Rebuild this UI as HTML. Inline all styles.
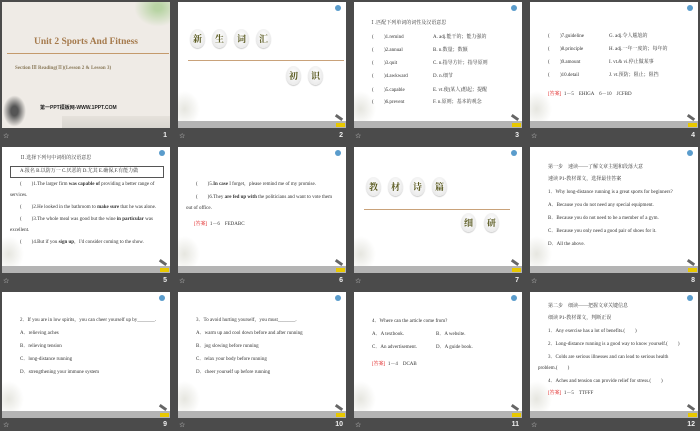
<!DOCTYPE html>
<html><head><meta charset="utf-8"><style>
*{margin:0;padding:0;box-sizing:border-box}
body{width:700px;height:431px;background:#4b4b4b;position:relative;overflow:hidden;font-family:"Liberation Serif","Noto Serif CJK SC",serif;}
.s{position:absolute;width:168px;height:126px;background:#fff;overflow:hidden}
.s .bar{position:absolute;left:0;right:0;bottom:0;height:7px;background:#b4b4b4}
.s .tag{position:absolute;right:1px;bottom:1px;width:9px;height:4px;background:#e8c800}
.s .ic{position:absolute;right:5px;top:3px;width:6px;height:6px;border-radius:50%;background:#5a9ccc}
.s .fl{position:absolute;left:0;bottom:7px;width:22px;height:30px;background:radial-gradient(ellipse at 30% 60%,#e6e6e0,#fff 70%)}
.s .pen{position:absolute;right:3px;bottom:9px;width:8px;height:3px;background:#666;transform:rotate(35deg)}
.t{position:absolute;font-size:5px;color:#333;white-space:nowrap;line-height:6px}
.cap{position:absolute;color:#ddd;font-size:7px;font-family:"Liberation Sans",sans-serif}
.num{position:absolute;color:#eee;font-size:7px;font-weight:bold;font-family:"Liberation Sans",sans-serif;text-align:right;width:20px}
.egg{position:absolute;width:15px;height:19px;border-radius:50%;background:radial-gradient(ellipse at 50% 40%,#fff,#e2e2e2);box-shadow:0 1px 1px #ccc;font-size:9px;font-weight:bold;color:#5a5a20;text-align:center;line-height:19px;font-family:"Noto Serif CJK SC",serif}
.hl{position:absolute;height:1px;background:#c9a27a}
.r{color:#e02020}
</style></head><body>

<!-- slide 1 -->
<div class="s" style="left:2px;top:2px;background:#efebe6">
<div class="t" style="left:0;width:168px;text-align:center;top:35px;font-size:9.5px;line-height:10px;color:#a57a4c;font-weight:bold">Unit 2 Sports And Fitness</div>
<div class="hl" style="left:5px;width:162px;top:51px;height:1px;background:#c49a6c"></div>
<div class="t" style="left:13px;top:64px;font-size:5px;color:#8a7a5a;font-weight:bold">Section Ⅲ Reading(Ⅱ)(Lesson 2 &amp; Lesson 3)</div>
<div class="t" style="left:38px;top:103px;font-size:5px;color:#222;font-weight:bold;font-family:'Liberation Sans','Noto Sans CJK SC',sans-serif">第一PPT模板网-WWW.1PPT.COM</div>
<div style="position:absolute;left:0;top:92px;width:25px;height:34px;background:radial-gradient(ellipse,#555 20%,transparent 65%)"></div>
<div style="position:absolute;left:60px;bottom:0;width:108px;height:12px;background:linear-gradient(#e6e2dc,#d8d6d0)"></div>
<div style="position:absolute;left:128px;top:0;width:40px;height:28px;background:radial-gradient(ellipse at 70% 20%,#b8d4a4 10%,transparent 60%)"></div>
</div>

<!-- slide 2 -->
<div class="s" style="left:178px;top:2px"><div class="ic"></div><div class="fl"></div><div class="pen"></div><div class="bar"></div><div class="tag"></div>
<div class="egg" style="left:12px;top:27px">新</div><div class="egg" style="left:34px;top:27px">生</div><div class="egg" style="left:56px;top:27px">词</div><div class="egg" style="left:78px;top:27px">汇</div>
<div class="hl" style="left:10px;width:156px;top:58px"></div>
<div class="egg" style="left:108px;top:64px">初</div><div class="egg" style="left:130px;top:64px">识</div>
</div>

<!-- slide 3 -->
<div class="s" style="left:354px;top:2px"><div class="ic"></div><div class="fl"></div><div class="pen"></div><div class="bar"></div><div class="tag"></div>
<div class="t" style="left:16px;top:19px">Ⅰ.匹配下列单词的词性及汉语意思</div>
<div class="t" style="left:18px;top:33px">(</div><div class="t" style="left:30px;top:33px">)1.remind</div><div class="t" style="left:79px;top:33px">A. adj.能干的；能力强的</div>
<div class="t" style="left:18px;top:46px">(</div><div class="t" style="left:30px;top:46px">)2.annual</div><div class="t" style="left:79px;top:46px">B. n.数量；数额</div>
<div class="t" style="left:18px;top:59px">(</div><div class="t" style="left:30px;top:59px">)3.quit</div><div class="t" style="left:79px;top:59px">C. n.指导方针；指导原则</div>
<div class="t" style="left:18px;top:72px">(</div><div class="t" style="left:30px;top:72px">)4.awkward</div><div class="t" style="left:79px;top:72px">D. n.细节</div>
<div class="t" style="left:18px;top:86px">(</div><div class="t" style="left:30px;top:86px">)5.capable</div><div class="t" style="left:79px;top:86px">E. vt.使(某人)想起；提醒</div>
<div class="t" style="left:18px;top:98px">(</div><div class="t" style="left:30px;top:98px">)6.prevent</div><div class="t" style="left:79px;top:98px">F. n.原则；基本的观念</div>
</div>

<!-- slide 4 -->
<div class="s" style="left:530px;top:2px"><div class="ic"></div><div class="fl"></div><div class="pen"></div><div class="bar"></div><div class="tag"></div>
<div class="t" style="left:18px;top:32px">(</div><div class="t" style="left:30px;top:32px">)7.guideline</div><div class="t" style="left:79px;top:32px">G. adj.令人尴尬的</div>
<div class="t" style="left:18px;top:45px">(</div><div class="t" style="left:30px;top:45px">)8.principle</div><div class="t" style="left:79px;top:45px">H. adj.一年一度的；每年的</div>
<div class="t" style="left:18px;top:58px">(</div><div class="t" style="left:30px;top:58px">)9.amount</div><div class="t" style="left:79px;top:58px">I. vt.&amp; vi.停止做某事</div>
<div class="t" style="left:18px;top:71px">(</div><div class="t" style="left:30px;top:71px">)10.detail</div><div class="t" style="left:79px;top:71px">J. vt.预防；阻止；阻挡</div>
<div class="t" style="left:18px;top:90px"><span class="r">[答案]</span>&nbsp; 1－5　EHIGA　6－10　JCFBD</div>
</div>

<!-- slide 5 -->
<div class="s" style="left:2px;top:147px"><div class="ic"></div><div class="fl"></div><div class="pen"></div><div class="bar"></div><div class="tag"></div>
<div class="t" style="left:18px;top:9px">Ⅱ.选择下列句中词组的汉语意思</div>
<div style="position:absolute;left:8px;top:19px;width:154px;height:12px;border:1px solid #555"></div>
<div class="t" style="left:18px;top:22px">A.报名 B.以防万一 C.厌恶的 D.尤其 E.确保,F.有能力做</div>
<div class="t" style="left:18px;top:35px">(　　)1.The larger firm <b>was capable of</b> providing a better range of</div>
<div class="t" style="left:8px;top:46px">services.</div>
<div class="t" style="left:18px;top:58px">(　　)2.He looked in the bathroom to <b>make sure</b> that he was alone.</div>
<div class="t" style="left:18px;top:70px">(　　)3.The whole meal was good but the wine <b>in particular</b> was</div>
<div class="t" style="left:8px;top:81px">excellent.</div>
<div class="t" style="left:18px;top:93px">(　　)4.But if you <b>sign up</b>，I'd consider coming to the show.</div>
</div>

<!-- slide 6 -->
<div class="s" style="left:178px;top:147px"><div class="ic"></div><div class="fl"></div><div class="pen"></div><div class="bar"></div><div class="tag"></div>
<div class="t" style="left:18px;top:35px">(　　)5.<b>In case</b> I forget，please remind me of my promise.</div>
<div class="t" style="left:18px;top:48px">(　　)6.They <b>are fed up with</b> the politicians and want to vote them</div>
<div class="t" style="left:8px;top:59px">out of office.</div>
<div class="t" style="left:16px;top:75px"><span class="r">[答案]</span>&nbsp; 1－6　FEDABC</div>
</div>

<!-- slide 7 -->
<div class="s" style="left:354px;top:147px"><div class="ic"></div><div class="fl"></div><div class="pen"></div><div class="bar"></div><div class="tag"></div>
<div class="egg" style="left:12px;top:30px">教</div><div class="egg" style="left:34px;top:30px">材</div><div class="egg" style="left:56px;top:30px">诗</div><div class="egg" style="left:78px;top:30px">篇</div>
<div class="hl" style="left:10px;width:146px;top:62px"></div>
<div class="egg" style="left:107px;top:66px">细</div><div class="egg" style="left:130px;top:66px">研</div>
</div>

<!-- slide 8 -->
<div class="s" style="left:530px;top:147px"><div class="ic"></div><div class="fl"></div><div class="pen"></div><div class="bar"></div><div class="tag"></div>
<div class="t" style="left:18px;top:18px">第一步　速读——了解文章主题和段落大意</div>
<div class="t" style="left:18px;top:30px">速读 P1-教材课文，选择最佳答案</div>
<div class="t" style="left:18px;top:43px">1．Why long-distance running is a great sports for beginners?</div>
<div class="t" style="left:18px;top:56px">A．Because you do not need any special equipment.</div>
<div class="t" style="left:18px;top:69px">B．Because you do not need to be a member of a gym.</div>
<div class="t" style="left:18px;top:82px">C．Because you only need a good pair of shoes for it.</div>
<div class="t" style="left:18px;top:95px">D．All the above.</div>
</div>

<!-- slide 9 -->
<div class="s" style="left:2px;top:292px"><div class="ic"></div><div class="fl"></div><div class="pen"></div><div class="bar"></div><div class="tag"></div>
<div class="t" style="left:18px;top:26px">2．If you are in low spirits，you can cheer yourself up by_______.</div>
<div class="t" style="left:18px;top:39px">A．relieving aches</div>
<div class="t" style="left:18px;top:52px">B．relieving tension</div>
<div class="t" style="left:18px;top:65px">C．long-distance running</div>
<div class="t" style="left:18px;top:78px">D．strengthening your immune system</div>
</div>

<!-- slide 10 -->
<div class="s" style="left:178px;top:292px"><div class="ic"></div><div class="fl"></div><div class="pen"></div><div class="bar"></div><div class="tag"></div>
<div class="t" style="left:18px;top:26px">3．To avoid hurting yourself，you must_______.</div>
<div class="t" style="left:18px;top:39px">A．warm up and cool down before and after running</div>
<div class="t" style="left:18px;top:52px">B．jog slowing before running</div>
<div class="t" style="left:18px;top:65px">C．relax your body before running</div>
<div class="t" style="left:18px;top:78px">D．cheer yourself up before running</div>
</div>

<!-- slide 11 -->
<div class="s" style="left:354px;top:292px"><div class="ic"></div><div class="fl"></div><div class="pen"></div><div class="bar"></div><div class="tag"></div>
<div class="t" style="left:18px;top:27px">4．Where can the article come from?</div>
<div class="t" style="left:18px;top:40px">A．A textbook.</div><div class="t" style="left:82px;top:40px">B．A website.</div>
<div class="t" style="left:18px;top:53px">C．An advertisement.</div><div class="t" style="left:82px;top:53px">D．A guide book.</div>
<div class="t" style="left:18px;top:70px"><span class="r">[答案]</span>&nbsp; 1－4　DCAB</div>
</div>

<!-- slide 12 -->
<div class="s" style="left:530px;top:292px"><div class="ic"></div><div class="fl"></div><div class="pen"></div><div class="bar"></div><div class="tag"></div>
<div class="t" style="left:18px;top:12px">第二步　细读——把握文章关键信息</div>
<div class="t" style="left:18px;top:24px">细读 P1-教材课文，判断正误</div>
<div class="t" style="left:18px;top:37px">1．Any exercise has a lot of benefits.(　　)</div>
<div class="t" style="left:18px;top:50px">2．Long-distance running is a good way to know yourself.(　　)</div>
<div class="t" style="left:18px;top:63px">3．Colds are serious illnesses and can lead to serious health</div>
<div class="t" style="left:8px;top:74px">problem.(　　)</div>
<div class="t" style="left:18px;top:87px">4．Aches and tension can provide relief for stress.(　　)</div>
<div class="t" style="left:18px;top:99px"><span class="r">[答案]</span>&nbsp; 1－5　TTFFF</div>
</div>

<!-- captions -->
<div class="cap" style="left:3px;top:132px">☆</div><div class="num" style="left:147px;top:132px">1</div>
<div class="cap" style="left:179px;top:132px">☆</div><div class="num" style="left:323px;top:132px">2</div>
<div class="cap" style="left:355px;top:132px">☆</div><div class="num" style="left:499px;top:132px">3</div>
<div class="cap" style="left:531px;top:132px">☆</div><div class="num" style="left:675px;top:132px">4</div>
<div class="cap" style="left:3px;top:277px">☆</div><div class="num" style="left:147px;top:277px">5</div>
<div class="cap" style="left:179px;top:277px">☆</div><div class="num" style="left:323px;top:277px">6</div>
<div class="cap" style="left:355px;top:277px">☆</div><div class="num" style="left:499px;top:277px">7</div>
<div class="cap" style="left:531px;top:277px">☆</div><div class="num" style="left:675px;top:277px">8</div>
<div class="cap" style="left:3px;top:421px">☆</div><div class="num" style="left:147px;top:421px">9</div>
<div class="cap" style="left:179px;top:421px">☆</div><div class="num" style="left:323px;top:421px">10</div>
<div class="cap" style="left:355px;top:421px">☆</div><div class="num" style="left:499px;top:421px">11</div>
<div class="cap" style="left:531px;top:421px">☆</div><div class="num" style="left:675px;top:421px">12</div>
</body></html>
